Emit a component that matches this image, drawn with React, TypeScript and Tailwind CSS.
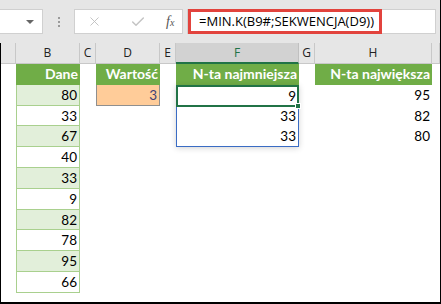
import { Check, X } from "lucide-react";

const data = [80, 33, 67, 40, 33, 9, 82, 78, 95, 66];
const smallest = [9, 33, 33];
const largest = [95, 82, 80];

// column widths: row header, B, C, D, E, F, G, H, I
const cols = "grid grid-cols-[15px_64px_16px_64px_16px_123px_16px_117px_1fr]";
const letters = ["", "B", "C", "D", "E", "F", "G", "H", ""];

const cellText = "text-[13.5px] text-right pr-[2px] leading-[20px] font-[family-name:Lato,sans-serif] text-black";
const headCell = "bg-[#70ad47] text-white font-bold text-[14px] text-right pr-[2px] leading-[20.8px] font-[family-name:Lato,sans-serif] whitespace-nowrap";

function FormulaBar() {
  return (
    <div className="h-[43px] bg-[#e6e6e6] flex items-start pt-[9px] pr-[4px]">
      {/* name box */}
      <div className="w-[43px] h-[25px] bg-white border border-l-0 border-[#d0d0d0] flex items-center justify-end pr-[8px]">
        <div className="w-0 h-0 border-l-[4px] border-r-[4px] border-t-[4px] border-l-transparent border-r-transparent border-t-[#666]" />
      </div>
      <div className="w-[31px] flex flex-col items-center gap-[2px] pt-[8px]">
        <span className="w-[2px] h-[2px] bg-[#9a9a9a]" />
        <span className="w-[2px] h-[2px] bg-[#9a9a9a]" />
        <span className="w-[2px] h-[2px] bg-[#9a9a9a]" />
      </div>
      {/* cancel / enter / insert function */}
      <div className="w-[109px] h-[25px] bg-white border border-[#d0d0d0] flex items-center pl-[12px]">
        <X size={15} strokeWidth={1.4} className="text-[#bdbdbd]" />
        <Check size={16} strokeWidth={2.2} className="text-[#c4c4c4] ml-[28px]" />
        <span className="ml-[20px] text-[14px] italic text-[#555] font-[family-name:'Liberation_Serif',serif] leading-none">
          f<span className="text-[10px]">x</span>
        </span>
      </div>
      <div className="ml-[4px] flex-1 h-[25px] bg-white border border-[#d0d0d0] flex items-center">
        <div className="w-[194px] h-[25px] border-[3px] border-[#e2433d] flex items-center pl-[8px] text-[13px] text-black font-[family-name:'Open_Sans',sans-serif] whitespace-nowrap">
          =MIN.K(B9#;SEKWENCJA(D9))
        </div>
      </div>
    </div>
  );
}

function ColumnHeaders() {
  return (
    <div className={`${cols} h-[21px] bg-[#e6e6e6] border-b border-[#c8c8c8]`}>
      {letters.map((l, i) =>
        l === "F" ? (
          <div key={i} className="bg-[#d2d2d2] border-r border-[#c0c0c0] border-b-2 border-b-[#217346] text-center text-[12px] leading-[19px] text-[#217346] font-[family-name:'Open_Sans',sans-serif]">
            F
          </div>
        ) : (
          <div key={i} className="border-r border-[#c8c8c8] text-center text-[12px] leading-[20px] text-[#222] font-[family-name:'Open_Sans',sans-serif]">
            {l}
          </div>
        )
      )}
    </div>
  );
}

function Sheet() {
  return (
    <div className="h-[238px] bg-white border-l border-black">
      <div className={`${cols} auto-rows-[20.8px]`}>
        {/* header row */}
        <div />
        <div className={headCell}>Dane</div>
        <div />
        <div className={headCell}>Wartość</div>
        <div />
        <div className={headCell}>N-ta najmniejsza</div>
        <div />
        <div className={headCell}>N-ta największa</div>
        <div />

        {data.map((v, r) => (
          <>
            <div key={`a${r}`} />
            <div
              key={`b${r}`}
              className={`${cellText} border-x border-b border-[#a9d08e] ${r % 2 === 0 ? "bg-[#e2efda]" : "bg-white"}`}
            >
              {v}
            </div>
            <div key={`c${r}`} />
            {r === 0 ? (
              <div key={`d${r}`} className={`${cellText} bg-[#ffcc99] border border-t-0 border-[#8f8f8f] !text-[#3f3f76]`}>
                3
              </div>
            ) : (
              <div key={`d${r}`} />
            )}
            <div key={`e${r}`} />
            {r === 0 && (
              <div key={`f${r}`} className="row-span-3 relative border border-[#3a6cc4] shadow-[0_1px_6px_rgba(0,0,0,0.18)] flex flex-col">
                {smallest.map((s, i) => (
                  <div key={i} className={`${cellText} h-[20.8px]`}>
                    {s}
                  </div>
                ))}
                {/* active cell with fill handle */}
                <div className="absolute -left-px -top-px w-[123px] h-[22px] border-2 border-[#217346]">
                  <div className="absolute -right-[4px] -bottom-[4px] w-[6px] h-[6px] bg-[#217346] border border-white" />
                </div>
              </div>
            )}
            {r > 2 && <div key={`f${r}`} />}
            <div key={`g${r}`} />
            <div key={`h${r}`} className={cellText}>
              {r < 3 ? largest[r] : ""}
            </div>
            <div key={`i${r}`} />
          </>
        ))}
      </div>
    </div>
  );
}

export default function App() {
  return (
    <div className="w-[441px] h-[304px] overflow-hidden bg-white border-r border-b-2 border-black">
      <FormulaBar />
      <div className="border-l border-black">
        <ColumnHeaders />
      </div>
      <Sheet />
    </div>
  );
}
